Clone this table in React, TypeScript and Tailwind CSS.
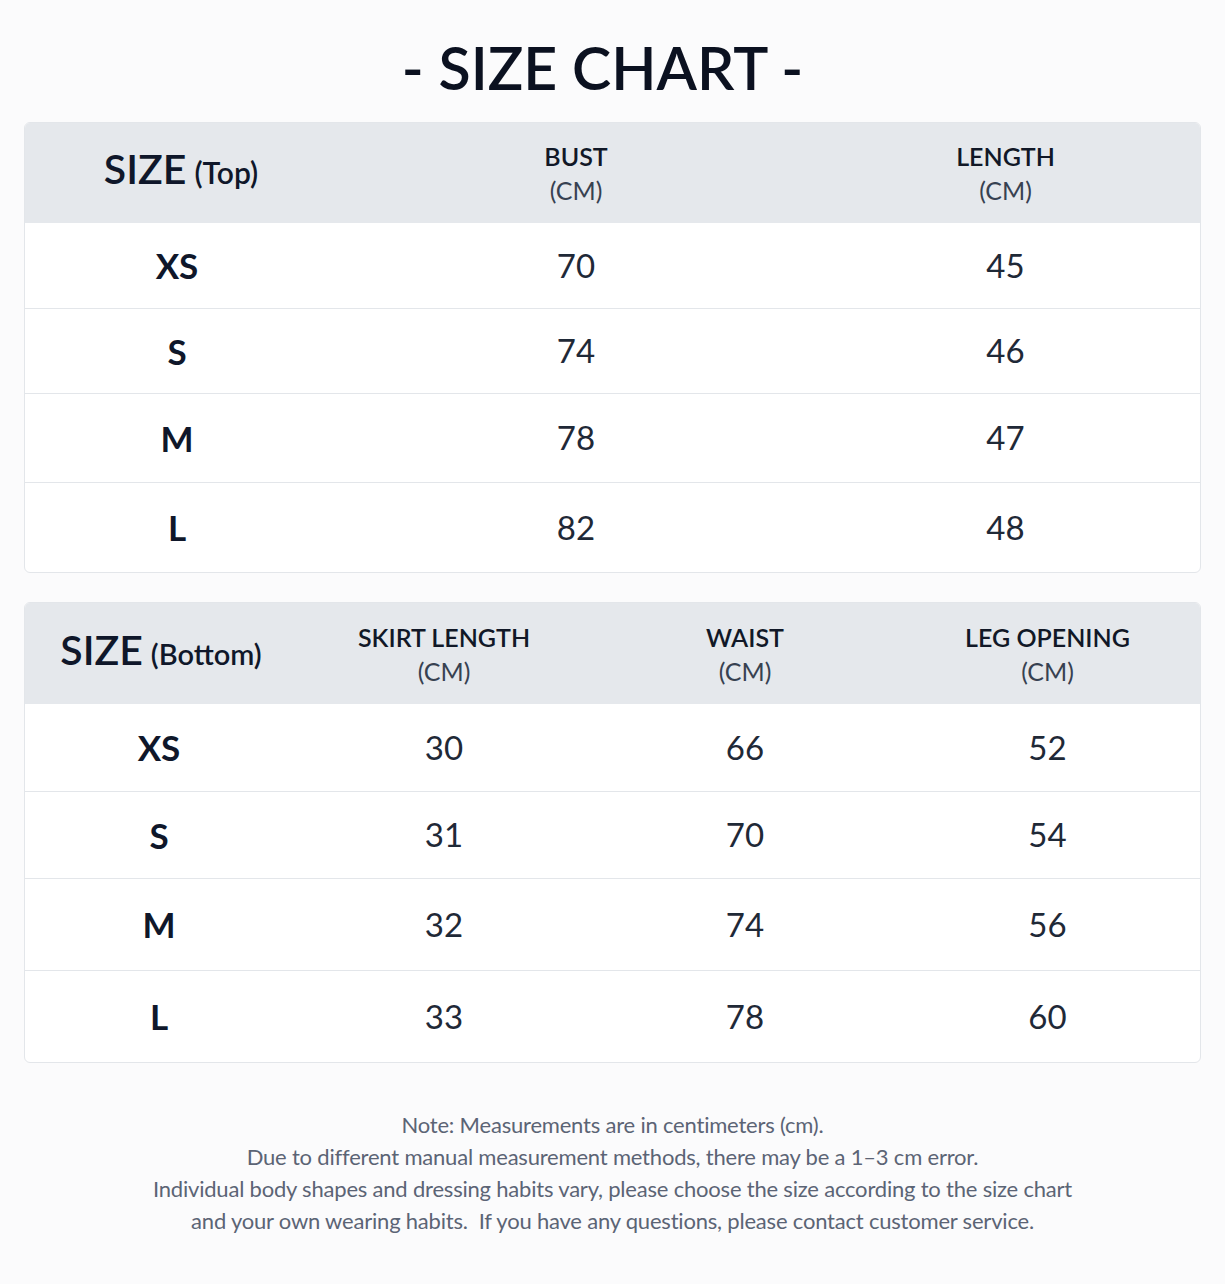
import React from "react";

const top = [
  ["XS", "70", "45"],
  ["S", "74", "46"],
  ["M", "78", "47"],
  ["L", "82", "48"],
];
const bottom = [
  ["XS", "30", "66", "52"],
  ["S", "31", "70", "54"],
  ["M", "32", "74", "56"],
  ["L", "33", "78", "60"],
];

function Head({ a }: { a: string }) {
  return (
    <div className="flex flex-col items-center justify-center leading-[34px]">
      <span className="text-[25px] font-semibold text-[#111827]">{a}</span>
      <span className="text-[25px] text-[#374151]">(CM)</span>
    </div>
  );
}

export default function App() {
  const topH = ["h-[85px]", "h-[85px]", "h-[89px]", "h-[90px]"];
  const botH = ["h-[87px]", "h-[87px]", "h-[92px]", "h-[92px]"];
  return (
    <div
      className="w-[1225px] h-[1284px] bg-[#fbfbfc] text-[#0f172a] flex flex-col px-6"
      style={{ fontFamily: "Lato, 'Open Sans', sans-serif" }}
    >
      <h1 className="text-[59px] font-semibold text-center leading-none pt-[38px] h-[122px] text-[#0b1120] pr-[20px]">
        - SIZE CHART -
      </h1>
      <div className="rounded-md border border-[#e3e6ea] overflow-hidden bg-white">
        <div className="grid grid-cols-[304px_494px_1fr] bg-[#e5e8ec] h-[100px] items-center">
          <div className="flex items-baseline justify-center gap-2 pl-2 pb-2">
            <span className="text-[41px] font-semibold">SIZE</span>
            <span className="text-[30px] font-semibold">(Top)</span>
          </div>
          <Head a="BUST" />
          <div className="pr-3"><Head a="LENGTH" /></div>
        </div>
        {top.map((r, i) => (
          <div
            key={i}
            className={`grid grid-cols-[304px_494px_1fr] items-center ${topH[i]} ${i > 0 ? "border-t border-[#e3e6ea]" : ""}`}
          >
            <div className="text-center text-[35px] font-bold">{r[0]}</div>
            <div className="text-center text-[33px] text-[#1f2937]">{r[1]}</div>
            <div className="text-center text-[33px] text-[#1f2937] pr-3">{r[2]}</div>
          </div>
        ))}
      </div>

      <div className="mt-[29px] rounded-md border border-[#e3e6ea] overflow-hidden bg-white">
        <div className="grid grid-cols-[268px_302px_300px_1fr] bg-[#e5e8ec] h-[101px] items-center">
          <div className="flex items-baseline justify-center gap-2 pl-1 pb-2">
            <span className="text-[41px] font-semibold">SIZE</span>
            <span className="text-[29px] font-semibold">(Bottom)</span>
          </div>
          <Head a="SKIRT LENGTH" />
          <Head a="WAIST" />
          <Head a="LEG OPENING" />
        </div>
        {bottom.map((r, i) => (
          <div
            key={i}
            className={`grid grid-cols-[268px_302px_300px_1fr] items-center ${botH[i]} ${i > 0 ? "border-t border-[#e3e6ea]" : ""}`}
          >
            <div className="text-center text-[35px] font-bold">{r[0]}</div>
            <div className="text-center text-[33px] text-[#1f2937]">{r[1]}</div>
            <div className="text-center text-[33px] text-[#1f2937]">{r[2]}</div>
            <div className="text-center text-[33px] text-[#1f2937]">{r[3]}</div>
          </div>
        ))}
      </div>

      <div className="mt-[46px] text-center text-[22px] leading-[32px] text-[#5b6475] tracking-[-0.2px]">
        <p>Note: Measurements are in centimeters (cm).</p>
        <p>Due to different manual measurement methods, there may be a 1–3 cm error.</p>
        <p>Individual body shapes and dressing habits vary, please choose the size according to the size chart</p>
        <p>and your own wearing habits.&nbsp; If you have any questions, please contact customer service.</p>
      </div>
    </div>
  );
}
